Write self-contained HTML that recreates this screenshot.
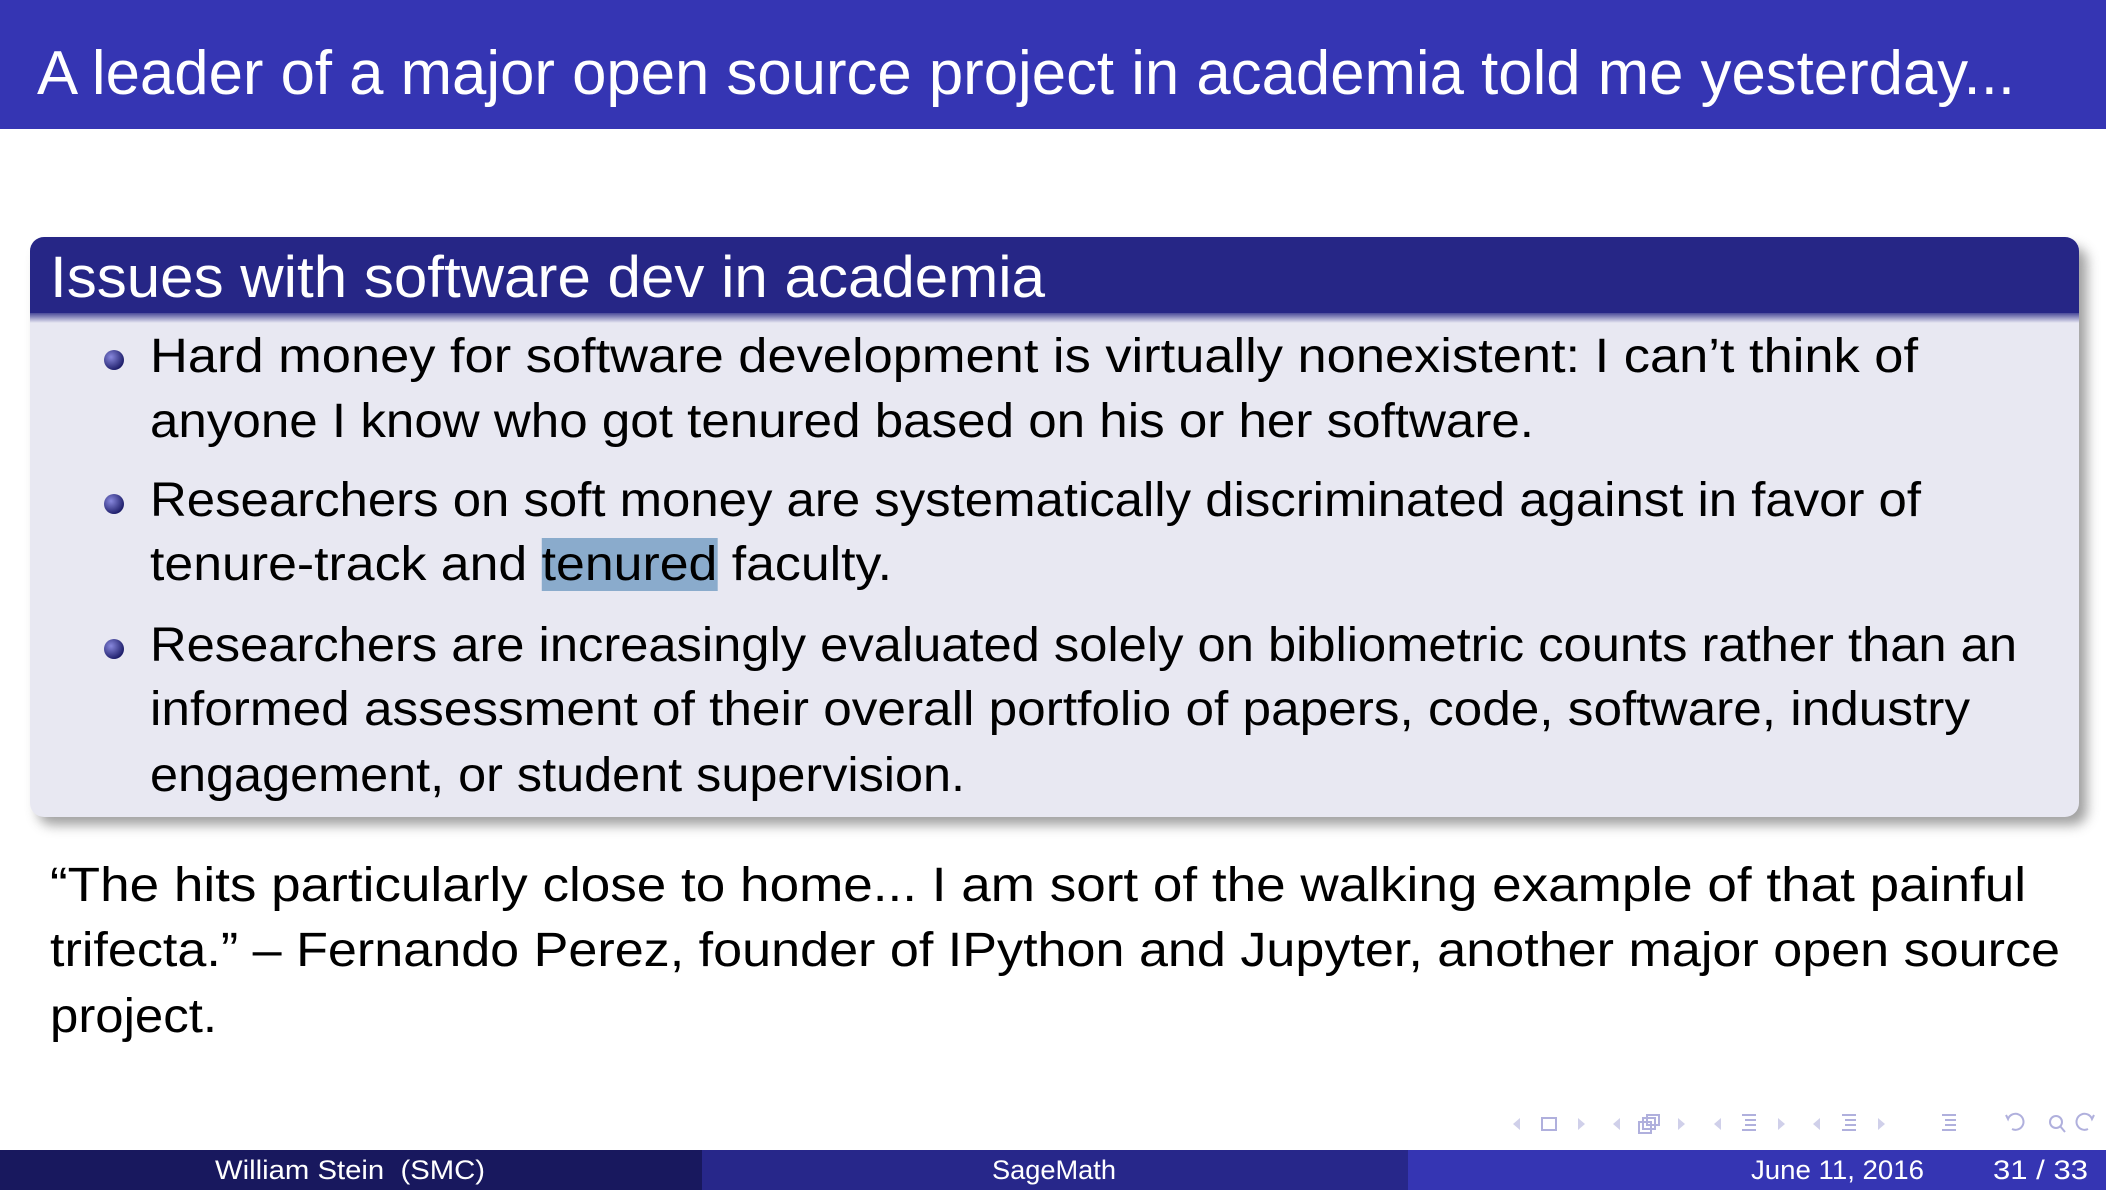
<!DOCTYPE html>
<html><head><meta charset="utf-8"><style>
*{margin:0;padding:0}
body{width:2106px;height:1190px;position:relative;background:#fff;overflow:hidden;font-family:"Liberation Sans",sans-serif}
.l{position:absolute;white-space:nowrap;transform-origin:0 50%;height:64px;line-height:64px}
.hl{background:#8aabcc}
</style></head><body>
<div style="position:absolute;left:0;top:0;width:2106px;height:129px;background:#3535b3"></div>
<div class="l" data-w="1978" style="left:37px;top:42px;color:#fff;font-size:62px">A leader of a major open source project in academia told me yesterday...</div>

<div style="position:absolute;left:38px;top:247px;width:2049px;height:578px;background:#888;border-radius:14px;filter:blur(6px);opacity:.8"></div>
<div style="position:absolute;left:30px;top:237px;width:2049px;height:580px;background:#e8e8f2;border-radius:14px;overflow:hidden">
<div style="height:76px;background:#262686"></div>
<div style="height:10px;background:linear-gradient(#4a4a9a,#e8e8f2)"></div>
</div>
<div class="l" data-w="995" style="left:50px;top:246px;color:#fff;font-size:58px">Issues with software dev in academia</div>

<svg style="position:absolute;left:0;top:0" width="2106" height="1190">
<defs><radialGradient id="b" cx=".35" cy=".35" r=".7"><stop offset="0" stop-color="#8888dd"/><stop offset="1" stop-color="#1a1a66"/></radialGradient></defs>
<circle cx="114" cy="360" r="10" fill="url(#b)"/>
<circle cx="114" cy="504" r="10" fill="url(#b)"/>
<circle cx="114" cy="649" r="10" fill="url(#b)"/>
<g fill="#d0d0ea" stroke="none">
<path d="M1520 1118l-7 6 7 6z"/><path d="M1578 1118l7 6-7 6z"/>
<path d="M1620 1118l-7 6 7 6z"/><path d="M1678 1118l7 6-7 6z"/>
<path d="M1721 1118l-7 6 7 6z"/><path d="M1778 1118l7 6-7 6z"/>
<path d="M1820 1118l-7 6 7 6z"/><path d="M1878 1118l7 6-7 6z"/>
</g>
<g fill="none" stroke="#b0b0dd" stroke-width="2">
<rect x="1542" y="1118" width="14" height="12"/>
<rect x="1639" y="1122" width="12" height="11"/><rect x="1643" y="1118" width="12" height="11"/><rect x="1647" y="1115" width="12" height="10"/>
<path d="M1742 1115h14M1745 1120h11M1745 1125h11M1742 1130h14"/>
<path d="M1842 1115h14M1845 1120h11M1845 1125h11M1842 1130h14"/>
<path d="M1942 1115h14M1945 1120h11M1945 1125h11M1942 1130h14"/>
<path d="M2012 1129a8 8 0 1 0-4-10l-2-4"/>
<circle cx="2056" cy="1122" r="6"/><path d="M2060 1126l5 6"/>
<path d="M2088 1129a8 8 0 1 1 4-10l2-4"/>
</g>
</svg>

<div class="l" data-w="1768" style="left:150px;top:325px;font-size:48px">Hard money for software development is virtually nonexistent: I can’t think of</div>
<div class="l" data-w="1384" style="left:150px;top:390px;font-size:48px">anyone I know who got tenured based on his or her software.</div>
<div class="l" data-w="1771" style="left:150px;top:469px;font-size:48px">Researchers on soft money are systematically discriminated against in favor of</div>
<div class="l" data-w="742" style="left:150px;top:533px;font-size:48px">tenure-track and <span class="hl">tenured</span> faculty.</div>
<div class="l" data-w="1867" style="left:150px;top:614px;font-size:48px">Researchers are increasingly evaluated solely on bibliometric counts rather than an</div>
<div class="l" data-w="1820" style="left:150px;top:678px;font-size:48px">informed assessment of their overall portfolio of papers, code, software, industry</div>
<div class="l" data-w="815" style="left:150px;top:744px;font-size:48px">engagement, or student supervision.</div>

<div class="l" data-w="1976" style="left:50px;top:854px;font-size:48px">“The hits particularly close to home... I am sort of the walking example of that painful</div>
<div class="l" data-w="2010" style="left:50px;top:919px;font-size:48px">trifecta.” – Fernando Perez, founder of IPython and Jupyter, another major open source</div>
<div class="l" data-w="167" style="left:50px;top:985px;font-size:48px">project.</div>

<div style="position:absolute;left:0;top:1150px;width:702px;height:40px;background:#18185e"></div>
<div style="position:absolute;left:702px;top:1150px;width:706px;height:40px;background:#27278a"></div>
<div style="position:absolute;left:1408px;top:1150px;width:698px;height:40px;background:#3535b3"></div>
<div class="l" data-w="270" style="left:215px;top:1138px;color:#fff;font-size:27px">William Stein&nbsp;&nbsp;(SMC)</div>
<div class="l" data-w="124" style="left:992px;top:1138px;color:#fff;font-size:27px">SageMath</div>
<div class="l" data-w="173" style="left:1751px;top:1138px;color:#fff;font-size:27px">June 11, 2016</div>
<div class="l" data-w="95" style="left:1993px;top:1138px;color:#fff;font-size:27px">31 / 33</div>
<script>
document.querySelectorAll('.l').forEach(function(e){var w=+e.getAttribute('data-w');var r=e.getBoundingClientRect().width;if(r>0)e.style.transform='scaleX('+(w/r)+')';});
</script>
</body></html>
